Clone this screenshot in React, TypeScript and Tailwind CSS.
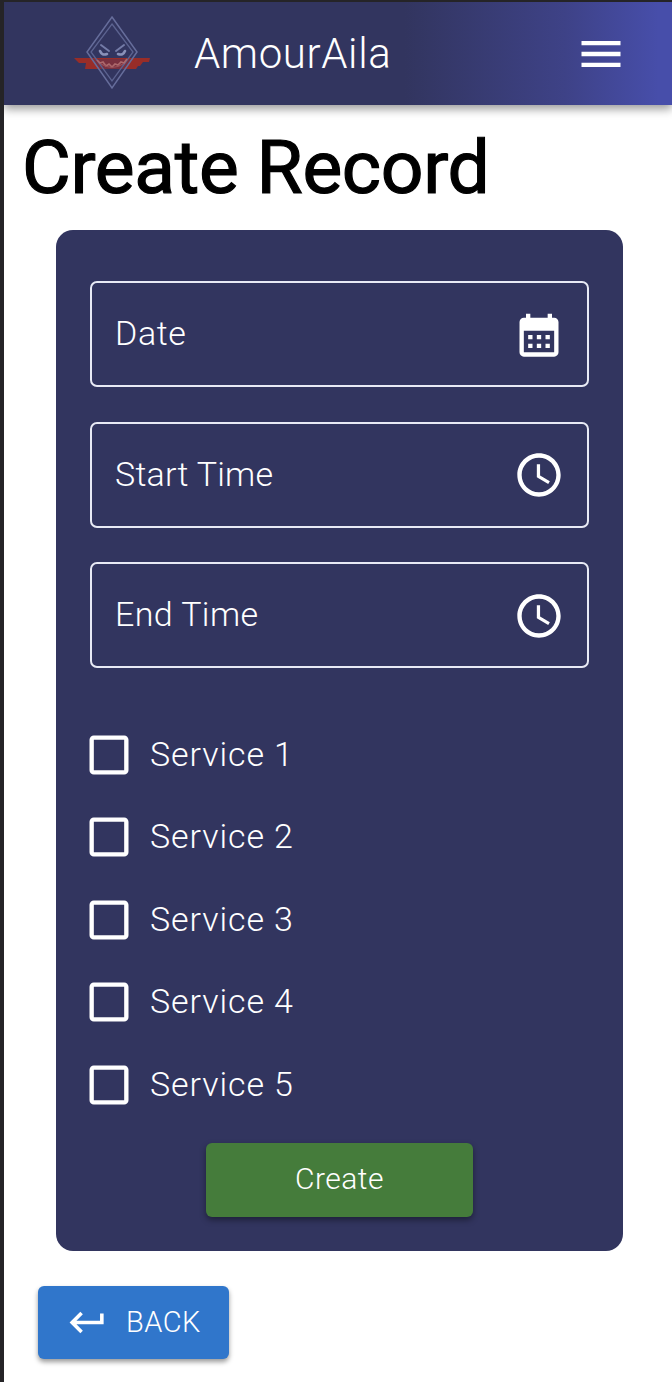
import React from "react";

const FIELDS = [
  { label: "Date", icon: "calendar", tracking: "tracking-[0.6px]" },
  { label: "Start Time", icon: "clock", tracking: "tracking-[0.25px]" },
  { label: "End Time", icon: "clock", tracking: "tracking-[0.4px]" },
];

const SERVICES = ["Service 1", "Service 2", "Service 3", "Service 4", "Service 5"];

const PATHS: Record<string, string> = {
  menu: "M3 18h18v-2H3v2zm0-5h18v-2H3v2zm0-7v2h18V6H3z",
  calendar:
    "M19 4h-1V2.2h-2V4H8V2.2H6V4H5c-1.11 0-1.99.9-1.99 2L3 20c0 1.1.89 2 2 2h14c1.1 0 2-.9 2-2V6c0-1.1-.9-2-2-2zm0 16H5V10h14v10zM9 14H7v-2h2v2zm4 0h-2v-2h2v2zm4 0h-2v-2h2v2zm-8 4H7v-2h2v2zm4 0h-2v-2h2v2zm4 0h-2v-2h2v2z",
  clock:
    "M11.99 2C6.47 2 2 6.48 2 12s4.47 10 9.99 10C17.52 22 22 17.52 22 12S17.52 2 11.99 2zM12 20c-4.42 0-8-3.58-8-8s3.58-8 8-8 8 3.58 8 8-3.58 8-8 8zM12.5 7H11v6l5.25 3.15.75-1.23-4.5-2.67z",
  box: "M19 5v14H5V5h14m0-2H5c-1.1 0-2 .9-2 2v14c0 1.1.9 2 2 2h14c1.1 0 2-.9 2-2V5c0-1.1-.9-2-2-2z",
  back: "M19 7v4H5.83l3.58-3.59L8 6l-6 6 6 6 1.41-1.41L5.83 13H21V7z",
};

function Icon({ name, className }: { name: string; className: string }) {
  return (
    <svg viewBox="0 0 24 24" className={className} fill="currentColor" aria-hidden="true">
      <path d={PATHS[name]} />
    </svg>
  );
}

function Logo() {
  return (
    <svg viewBox="0 0 80 76" className="h-[76px] w-[80px] shrink-0 -translate-y-px" fill="none" aria-hidden="true">
      <path d="M2 43h76l-1 4h-6l-3 4h-2l-2 3H13l1-6H7z" fill="#982d28" />
      <path d="M20 44h40l-7 10H27z" fill="#79303f" />
      <path d="M40 2 65 37 40 73 15 37z" stroke="#666d9b" strokeWidth="1.5" />
      <path d="M40 9 61 37 40 66 19 37z" stroke="#5c6390" strokeWidth="1.3" />
      <path d="m29 30 8 6M52 30l-8 6" stroke="#747ba7" strokeWidth="2" strokeLinecap="round" />
      <path d="M28 36q2 5 7 3M53 36q-2 5-7 3" stroke="#8a91b9" strokeWidth="2.6" strokeLinecap="round" />
      <path d="m25 45 3 3 3-1 3 4 3-2 3 3 3-3 3 1 3-3 3 1 3-4" stroke="#ac686c" strokeWidth="1.7" />
      <path d="M29 49q11 7 22 0" stroke="#98505a" strokeWidth="1.2" />
    </svg>
  );
}

export default function App() {
  return (
    <div className="h-[1382px] w-[672px] overflow-hidden border-l-4 border-t-2 border-[#252427] bg-white font-['Roboto','Liberation_Sans',sans-serif] font-light text-white">
      <header className="flex h-[103px] items-center bg-[linear-gradient(90deg,#32355f_0%,#32355f_60%,#3e4287_84%,#474eaa_98%)] pl-[68px] pr-[45px] shadow-[0_4px_9px_rgba(0,0,0,0.4)]">
        <Logo />
        <span className="ml-[42px] text-[42px] leading-[50px] tracking-[0.6px]">AmourAila</span>
        <Icon name="menu" className="ml-auto size-[52px]" />
      </header>

      <h1 className="ml-[18px] mt-[17px] h-[90px] whitespace-nowrap text-[75px] font-normal leading-[90px] tracking-[-0.35px] text-black [-webkit-text-stroke:1.2px_black]">
        Create Record
      </h1>

      <main className="ml-[52px] mt-[18px] flex h-[1021px] w-[567px] flex-col rounded-[17px] bg-[#32355f] px-[34px] pt-[51px]">
        <div className="flex flex-col gap-[34.7px]">
          {FIELDS.map((field) => (
            <div
              key={field.label}
              className="flex h-[106px] w-[499px] items-center justify-between rounded-[7px] border-2 border-[#e8eaf5] pl-[23px] pr-[22px]"
            >
              <span className={`pb-[2px] text-[34px] leading-10 ${field.tracking}`}>{field.label}</span>
              <Icon name={field.icon} className="mt-px size-[52px]" />
            </div>
          ))}
        </div>

        <div className="mt-[45px] flex flex-col">
          {SERVICES.map((service) => (
            <label key={service} className="flex h-[82.5px] items-center">
              <Icon name="box" className="-ml-[7px] size-[52px]" />
              <span className="ml-[15px] pb-[2px] text-[34px] leading-10 tracking-[0.9px]">{service}</span>
            </label>
          ))}
        </div>

        <button className="mt-[17px] h-[74px] w-[267px] self-center rounded-[6px] bg-[#457c3b] pb-px text-[30px] leading-9 tracking-[0.5px] shadow-[0_3px_6px_rgba(0,0,0,0.4)]">
          Create
        </button>
      </main>

      <button className="ml-[34px] mt-[35px] flex h-[73px] w-[191px] items-center rounded-[6px] bg-[#3076cb] pl-[28px] text-[29px] leading-9 shadow-[0_3px_5px_rgba(0,0,0,0.4)]">
        <Icon name="back" className="size-[43px]" />
        <span className="ml-[17px] pb-[2px] tracking-[0.5px]">BACK</span>
      </button>
    </div>
  );
}
